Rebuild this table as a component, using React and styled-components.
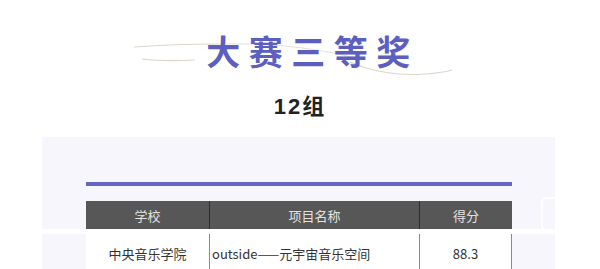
import styled, { createGlobalStyle } from "styled-components";

const GlobalStyle = createGlobalStyle`
  html, body {
    margin: 0;
    padding: 0;
    background: #fff;
  }
  body {
    font-family: "Noto Sans CJK SC", "Liberation Sans", sans-serif;
  }
`;

const Page = styled.div`
  width: 600px;
  height: 269px;
  overflow: hidden;
  background: #fff;
`;

const TitleBlock = styled.header`
  position: relative;
  padding-top: 31px;
  text-align: center;
`;

const Swoosh = styled.svg`
  position: absolute;
  left: 0;
  top: 0;
  pointer-events: none;
`;

const Title = styled.h1`
  position: relative;
  margin: 0;
  font-size: 34px;
  line-height: 40px;
  font-weight: 700;
  letter-spacing: 8.5px;
  padding-left: 25px;
  color: #5c5fbf;
`;

const Group = styled.h2`
  margin: 22px 0 0;
  font-family: "Liberation Sans", "Noto Sans CJK SC", sans-serif;
  font-size: 22px;
  line-height: 28px;
  font-weight: 700;
  letter-spacing: 2px;
  color: #222;
  text-align: center;
`;

const Panel = styled.section`
  position: relative;
  margin: ${(p) => p.$top || 0}px 45px 0 42px;
  padding: ${(p) => p.$pad || 0}px 43px 0 44px;
  background: #f7f6fc;
`;

const Rule = styled.div`
  height: 4px;
  background: #6366c4;
  margin-bottom: 15px;
`;

const Grid = styled.div`
  display: grid;
  grid-template-columns: 124px 210px 92px;
  background: ${(p) => (p.$head ? "#575757" : "#fff")};
`;

const Cell = styled.div`
  height: ${(p) => (p.$head ? 28 : 38)}px;
  display: flex;
  align-items: center;
  justify-content: ${(p) => (p.$left ? "flex-start" : "center")};
  padding-left: ${(p) => (p.$left ? 2 : 0)}px;
  font-size: 13px;
  color: ${(p) => (p.$head ? "#e2e2e2" : "#333")};
  border-right: 1px solid ${(p) => (p.$head ? "#2c2c2c" : "#8a8a8a")};
  box-sizing: border-box;
  white-space: nowrap;
  &:last-child {
    border-right: ${(p) => (p.$head ? "none" : "1px solid #8a8a8a")};
  }
`;

const Mark = styled.div`
  position: absolute;
  right: -8px;
  top: 60px;
  width: 18px;
  height: 30px;
  border: 2px solid #fff;
  border-radius: 6px;
  opacity: 0.9;
`;

export default function App() {
  return (
    <Page>
      <GlobalStyle />
      <TitleBlock>
        <Swoosh width="600" height="90" viewBox="0 0 600 90">
          <path d="M134 47 C160 45, 190 44, 218 44" stroke="#ddd5ca" strokeWidth="1.2" fill="none" />
          <path d="M142 59 C160 61, 175 61, 195 60" stroke="#ddd5ca" strokeWidth="1.2" fill="none" />
          <path d="M218 44 C260 43, 310 46, 355 58" stroke="#e6e0d8" strokeWidth="1" fill="none" />
          <path d="M350 62 C372 72, 400 76, 425 74 C438 73, 446 72, 452 70" stroke="#ddd5ca" strokeWidth="1.2" fill="none" />
        </Swoosh>
        <Title>大赛三等奖</Title>
        <Group>12组</Group>
      </TitleBlock>
      <Panel $top={16} $pad={45}>
        <Rule />
        <Grid $head>
          <Cell $head>学校</Cell>
          <Cell $head>项目名称</Cell>
          <Cell $head>得分</Cell>
        </Grid>
        <Mark />
      </Panel>
      <Panel $top={5}>
        <Grid>
          <Cell>中央音乐学院</Cell>
          <Cell $left>outside——元宇宙音乐空间</Cell>
          <Cell>88.3</Cell>
        </Grid>
      </Panel>
    </Page>
  );
}
